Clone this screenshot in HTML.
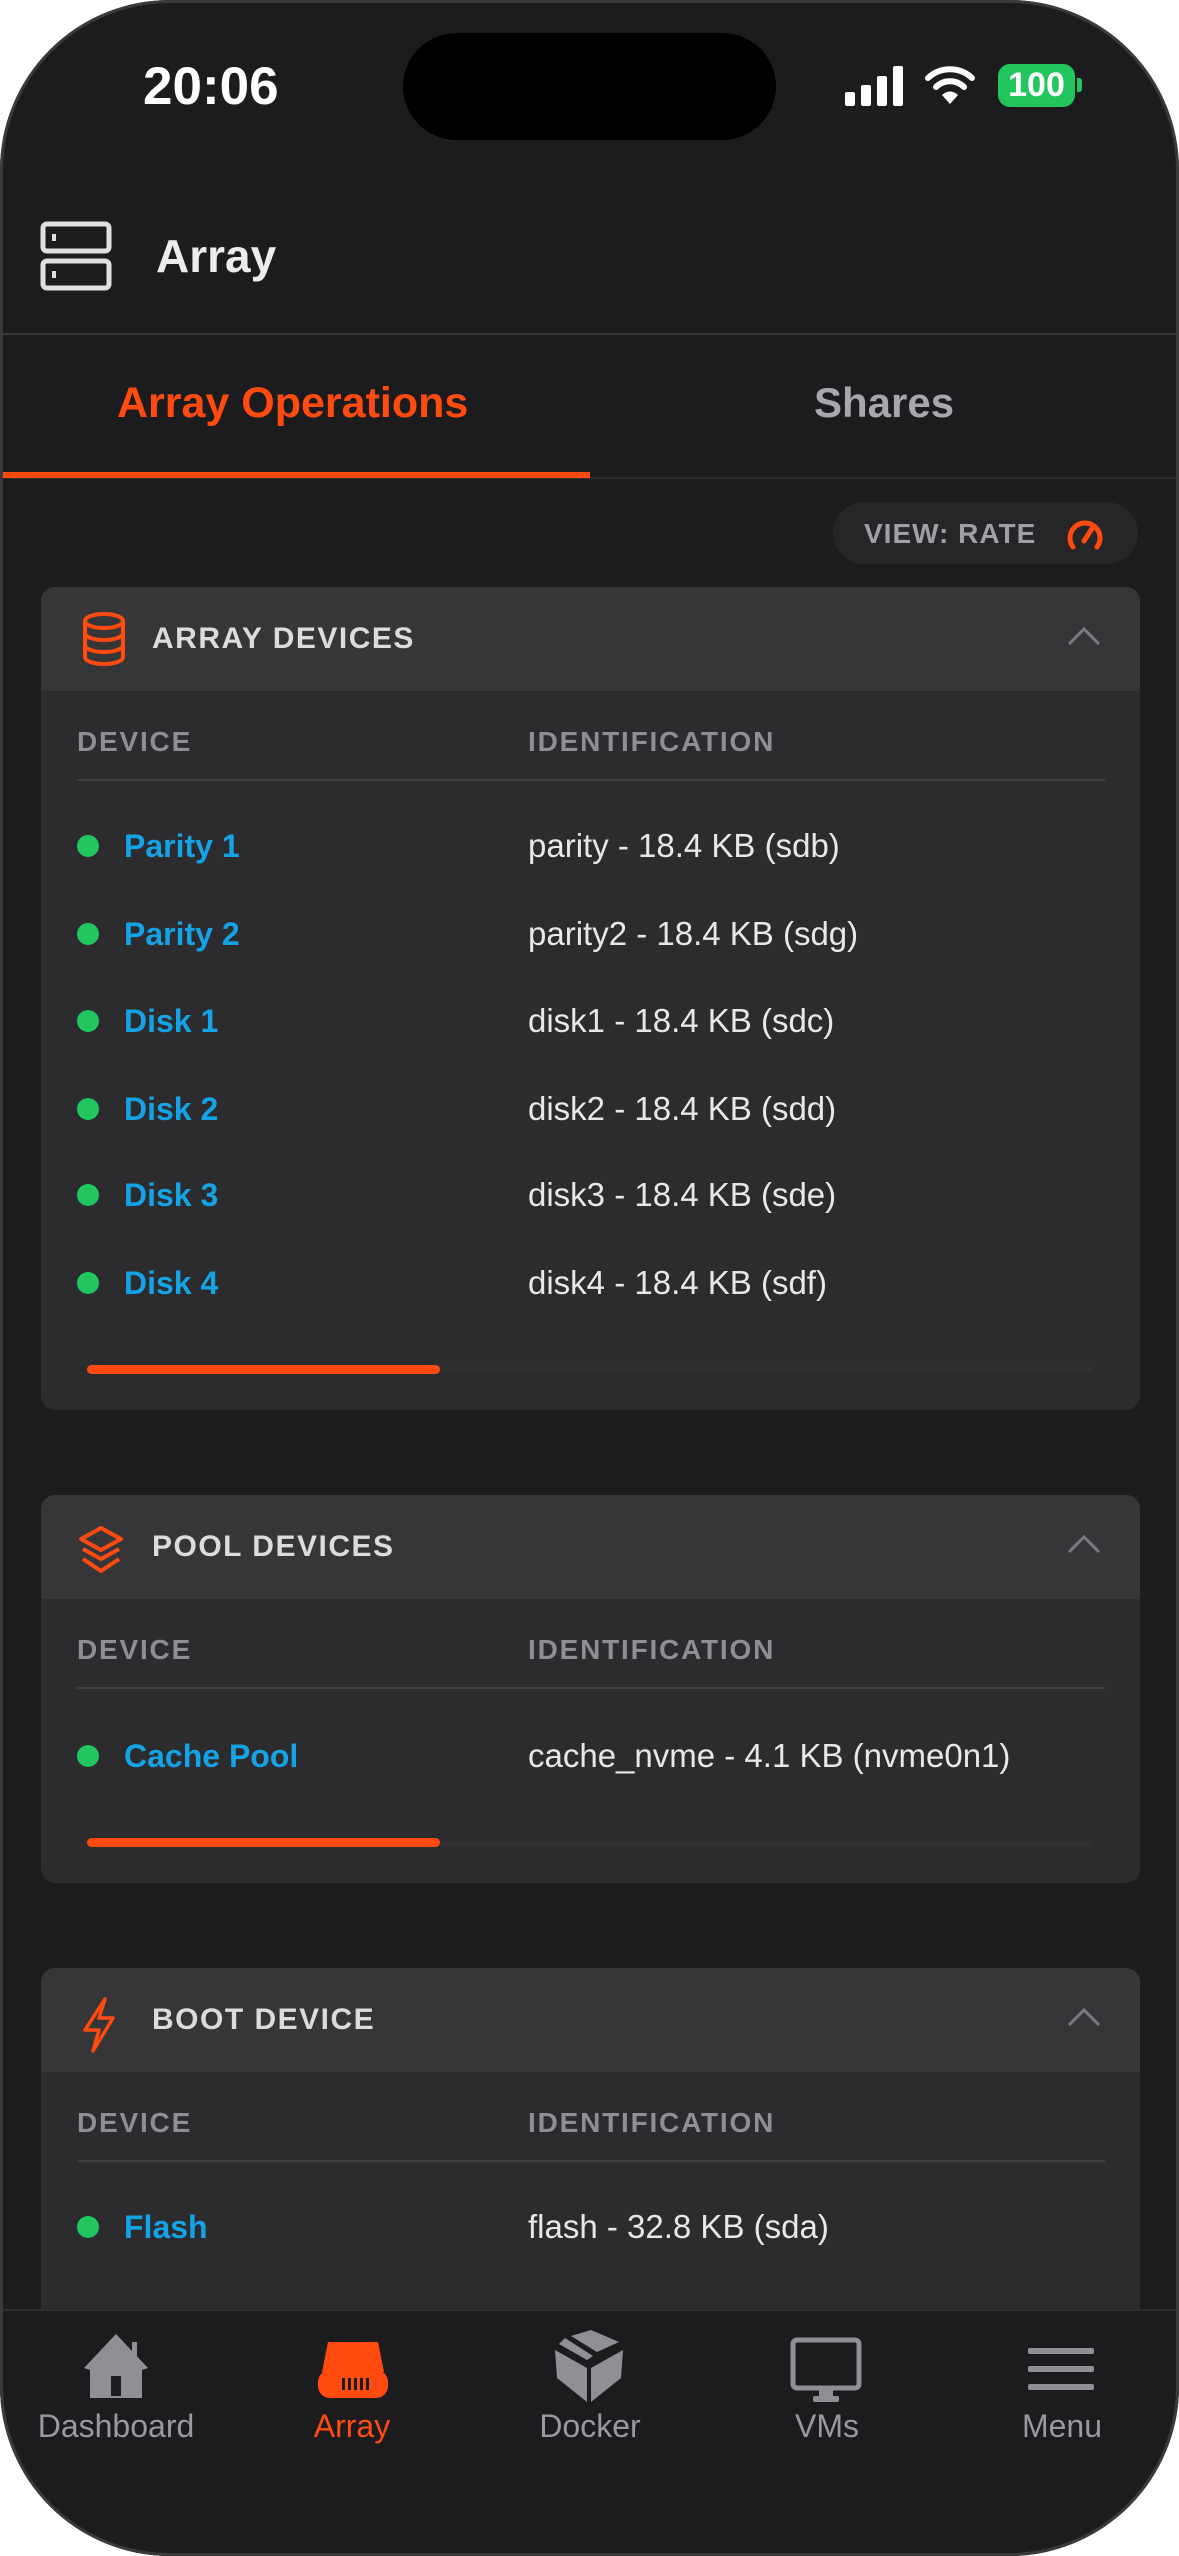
<!DOCTYPE html>
<html><head><meta charset="utf-8"><style>
*{margin:0;padding:0;box-sizing:border-box}
html,body{width:1179px;height:2556px;background:#fff;overflow:hidden;font-family:"Liberation Sans",sans-serif}
.phone{position:absolute;left:0;top:0;width:1179px;height:2556px;background:#1c1c1e;border-radius:170px;overflow:hidden}
.frame{position:absolute;left:0;top:0;width:1179px;height:2556px;border-radius:170px;border:3px solid #3a3a3c;pointer-events:none}
.a{position:absolute;white-space:nowrap}
.island{left:403px;top:33px;width:373px;height:107px;background:#000;border-radius:54px}
.card{position:absolute;left:41px;width:1099px;background:#2c2c2e;border-radius:14px;overflow:hidden}
.ch{position:absolute;left:0;top:0;width:100%;height:104px;background:#363638}
.ct{position:absolute;left:111px;top:35px;font-size:30px;font-weight:bold;color:#dcdcdc;letter-spacing:1.5px}
.chev{position:absolute;right:38px;top:38px}
.colh{position:absolute;font-size:28px;font-weight:bold;color:#8e8e93;letter-spacing:1.8px}
.line{position:absolute;left:36px;width:1028px;height:2px;background:#3e3e40}
.dot{position:absolute;left:36px;width:22px;height:22px;border-radius:50%;background:#22c55e}
.nm{position:absolute;left:83px;font-size:32px;font-weight:bold;color:#14a3e6}
.id{position:absolute;left:487px;font-size:33px;color:#e8e8e8}
.sb{position:absolute;left:46px;width:353px;height:9px;border-radius:5px;background:#ff4a10}
.tr{position:absolute;left:46px;width:1005px;height:5px;background:#303032}
.tab{position:absolute;top:2408px;font-size:32px;color:#9a9a9e;text-align:center;width:220px}
</style></head><body>
<div class="phone">
<div class="a island"></div>
<div class="a" style="left:143px;top:56px;font-size:53px;color:#fff;font-weight:bold">20:06</div>
<svg class="a" style="left:845px;top:66px" width="62" height="40"><rect x="0" y="26" width="10" height="14" rx="2" fill="#fff"/><rect x="16" y="19" width="10" height="21" rx="2" fill="#fff"/><rect x="32" y="10" width="10" height="30" rx="2" fill="#fff"/><rect x="48" y="0" width="10" height="40" rx="2" fill="#fff"/></svg>
<svg class="a" style="left:925px;top:64px" width="50" height="42" viewBox="0 0 50 42"><path d="M3 14 A32 32 0 0 1 47 14" stroke="#fff" stroke-width="6" fill="none" stroke-linecap="round"/><path d="M11 23 A20 20 0 0 1 39 23" stroke="#fff" stroke-width="6" fill="none" stroke-linecap="round"/><path d="M25 40 L17 31 A11 11 0 0 1 33 31 Z" fill="#fff"/></svg>
<div class="a" style="left:998px;top:64px;width:77px;height:43px;background:#22c55e;border-radius:12px;color:#fff;font-size:34px;font-weight:bold;text-align:center;line-height:43px">100</div>
<div class="a" style="left:1077px;top:78px;width:5px;height:14px;background:#22c55e;border-radius:0 3px 3px 0"></div>

<svg class="a" style="left:40px;top:221px" width="72" height="70" viewBox="0 0 72 70"><rect x="3" y="3" width="66" height="27" rx="4" stroke="#e0e0e0" stroke-width="5" fill="none"/><rect x="3" y="40" width="66" height="27" rx="4" stroke="#e0e0e0" stroke-width="5" fill="none"/><rect x="12" y="13" width="4" height="7" fill="#e0e0e0"/><rect x="12" y="50" width="4" height="7" fill="#e0e0e0"/></svg>
<div class="a" style="left:156px;top:229px;font-size:46px;color:#ececec;font-weight:bold">Array</div>
<div class="a" style="left:0;top:333px;width:1179px;height:2px;background:#38383a"></div>

<div class="a" style="left:117px;top:379px;font-size:43px;color:#ff4a10;font-weight:bold">Array Operations</div>
<div class="a" style="left:814px;top:379px;font-size:42px;color:#a8a8ac;font-weight:bold">Shares</div>
<div class="a" style="left:0;top:477px;width:1179px;height:2px;background:#2a2a2c"></div>
<div class="a" style="left:0;top:472px;width:590px;height:6px;background:#ff4a10"></div>

<div class="a" style="left:833px;top:502px;width:305px;height:62px;background:#262628;border-radius:31px"></div>
<div class="a" style="left:864px;top:518px;font-size:28px;font-weight:bold;color:#a0a0a4;letter-spacing:1px">VIEW: RATE</div>
<svg class="a" style="left:1065px;top:515px" width="40" height="38" viewBox="0 0 40 38"><path d="M8 32 A15 15 0 1 1 32 32" stroke="#ff4a10" stroke-width="5" fill="none" stroke-linecap="round"/><path d="M19 26 L28 12" stroke="#ff4a10" stroke-width="5" stroke-linecap="round"/></svg>

<div class="card" style="top:587px;height:823px">
<div class="ch"></div>
<svg class="a" style="left:40px;top:24px" width="46" height="56" viewBox="0 0 46 56"><g stroke="#ff4a10" stroke-width="4" fill="none"><ellipse cx="23" cy="10" rx="19" ry="7"/><path d="M4 10v36c0 4 8.5 7 19 7s19-3 19-7V10"/><path d="M4 22c0 4 8.5 7 19 7s19-3 19-7"/><path d="M4 34c0 4 8.5 7 19 7s19-3 19-7"/></g></svg>
<div class="ct">ARRAY DEVICES</div>
<svg class="chev" width="36" height="22"><path d="M3 19 L18 4 L33 19" stroke="#7a7a80" stroke-width="3" fill="none"/></svg>
<div class="colh" style="left:36px;top:139px">DEVICE</div>
<div class="colh" style="left:487px;top:139px">IDENTIFICATION</div>
<div class="line" style="top:192px"></div>
<div class="dot" style="top:248px"></div><div class="nm" style="top:241px">Parity 1</div><div class="id" style="top:240px">parity - 18.4 KB (sdb)</div>
<div class="dot" style="top:336px"></div><div class="nm" style="top:329px">Parity 2</div><div class="id" style="top:328px">parity2 - 18.4 KB (sdg)</div>
<div class="dot" style="top:423px"></div><div class="nm" style="top:416px">Disk 1</div><div class="id" style="top:415px">disk1 - 18.4 KB (sdc)</div>
<div class="dot" style="top:511px"></div><div class="nm" style="top:504px">Disk 2</div><div class="id" style="top:503px">disk2 - 18.4 KB (sdd)</div>
<div class="dot" style="top:597px"></div><div class="nm" style="top:590px">Disk 3</div><div class="id" style="top:589px">disk3 - 18.4 KB (sde)</div>
<div class="dot" style="top:685px"></div><div class="nm" style="top:678px">Disk 4</div><div class="id" style="top:677px">disk4 - 18.4 KB (sdf)</div>
<div class="tr" style="top:780px"></div>
<div class="sb" style="top:778px"></div>
</div>

<div class="card" style="top:1495px;height:388px">
<div class="ch"></div>
<svg class="a" style="left:36px;top:30px" width="48" height="52" viewBox="0 0 48 52"><g stroke="#ff4a10" stroke-width="4" fill="none" stroke-linejoin="round"><path d="M24 3 L44 14 L24 25 L4 14 Z"/><path d="M6 24 L24 34 L42 24"/><path d="M6 34 L24 46 L42 34"/></g></svg>
<div class="ct">POOL DEVICES</div>
<svg class="chev" width="36" height="22"><path d="M3 19 L18 4 L33 19" stroke="#7a7a80" stroke-width="3" fill="none"/></svg>
<div class="colh" style="left:36px;top:139px">DEVICE</div>
<div class="colh" style="left:487px;top:139px">IDENTIFICATION</div>
<div class="line" style="top:192px"></div>
<div class="dot" style="top:250px"></div><div class="nm" style="top:243px">Cache Pool</div><div class="id" style="top:242px">cache_nvme - 4.1 KB (nvme0n1)</div>
<div class="tr" style="top:346px"></div>
<div class="sb" style="top:343px"></div>
</div>

<div class="card" style="top:1968px;height:400px">
<div class="ch"></div>
<svg class="a" style="left:38px;top:28px" width="40" height="58" viewBox="0 0 40 58"><path d="M26 3 L6 34 L20 34 L14 55 L34 22 L20 22 Z" stroke="#ff4a10" stroke-width="3.5" fill="none" stroke-linejoin="round"/></svg>
<div class="ct">BOOT DEVICE</div>
<svg class="chev" width="36" height="22"><path d="M3 19 L18 4 L33 19" stroke="#7a7a80" stroke-width="3" fill="none"/></svg>
<div class="colh" style="left:36px;top:139px">DEVICE</div>
<div class="colh" style="left:487px;top:139px">IDENTIFICATION</div>
<div class="line" style="top:192px"></div>
<div class="dot" style="top:248px"></div><div class="nm" style="top:241px">Flash</div><div class="id" style="top:240px">flash - 32.8 KB (sda)</div>
</div>

<div class="a" style="left:0;top:2309px;width:1179px;height:260px;background:#1c1c1e;border-top:2px solid #2e2e30"></div>
<svg class="a" style="left:80px;top:2332px" width="72" height="68" viewBox="0 0 72 68"><path d="M36 2 L4 36 L10 38 L10 66 L62 66 L62 38 L68 36 Z" fill="#909094"/><rect x="31" y="44" width="10" height="20" fill="#1c1c1e"/><rect x="52" y="10" width="5" height="20" fill="#909094"/></svg>
<svg class="a" style="left:316px;top:2340px" width="74" height="60" viewBox="0 0 74 60"><path d="M12 2 H62 L68 32 H6 Z" fill="#ff4a10"/><rect x="2" y="30" width="70" height="28" rx="12" fill="#ff4a10"/><g fill="#1c1c1e"><rect x="26" y="38" width="3" height="12"/><rect x="32" y="38" width="3" height="12"/><rect x="38" y="38" width="3" height="12"/><rect x="44" y="38" width="3" height="12"/><rect x="50" y="38" width="3" height="12"/></g></svg>
<svg class="a" style="left:553px;top:2328px" width="72" height="76" viewBox="0 0 72 76"><path d="M2 22 L34 40 L34 74 L4 50 Z" fill="#909094"/><path d="M70 22 L38 40 L38 74 L68 50 Z" fill="#909094"/><path d="M6 16 L34 32 L40 28 L12 10 Z" fill="#909094"/><path d="M18 8 L44 24 L66 14 L38 2 Z" fill="#909094"/></svg>
<svg class="a" style="left:789px;top:2336px" width="74" height="70" viewBox="0 0 74 70"><rect x="4" y="4" width="66" height="48" rx="4" stroke="#909094" stroke-width="5" fill="none"/><rect x="30" y="54" width="14" height="8" fill="#909094"/><rect x="24" y="60" width="26" height="6" rx="2" fill="#909094"/></svg>
<svg class="a" style="left:1026px;top:2346px" width="70" height="46" viewBox="0 0 70 46"><rect x="2" y="2" width="66" height="6" rx="2" fill="#909094"/><rect x="2" y="20" width="66" height="6" rx="2" fill="#909094"/><rect x="2" y="38" width="66" height="6" rx="2" fill="#909094"/></svg>
<div class="tab" style="left:6px">Dashboard</div>
<div class="tab" style="left:242px;color:#ff4a10">Array</div>
<div class="tab" style="left:480px">Docker</div>
<div class="tab" style="left:717px">VMs</div>
<div class="tab" style="left:952px">Menu</div>
</div>
<div class="frame"></div>
</body></html>
